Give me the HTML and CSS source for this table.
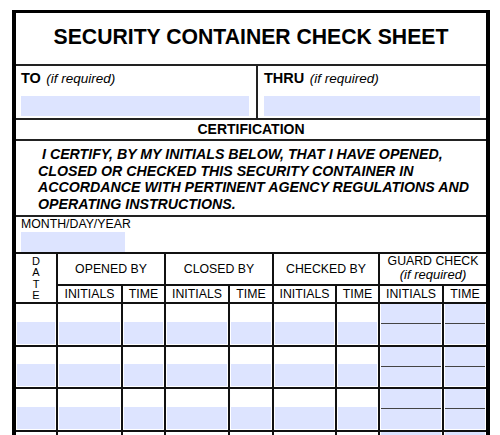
FILE: index.html
```html
<!DOCTYPE html>
<html>
<head>
<meta charset="utf-8">
<title>Security Container Check Sheet</title>
<link rel="stylesheet" href="styles.css">
</head>
<body>
<div class="sheet">
  <div class="title">SECURITY CONTAINER CHECK SHEET</div>
  <div class="addr">
    <div class="addr-cell to">
      <div class="label"><b>TO</b> <i>(if required)</i></div>
      <div class="field"></div>
    </div>
    <div class="addr-cell thru">
      <div class="label"><b>THRU</b> <i>(if required)</i></div>
      <div class="field"></div>
    </div>
  </div>
  <div class="cert-head">CERTIFICATION</div>
  <div class="cert-body">I CERTIFY, BY MY INITIALS BELOW, THAT I HAVE OPENED,<br>CLOSED OR CHECKED THIS SECURITY CONTAINER IN<br>ACCORDANCE WITH PERTINENT AGENCY REGULATIONS AND<br>OPERATING INSTRUCTIONS.</div>
  <div class="date-row">
    <div class="date-label">MONTH/DAY/YEAR</div>
    <div class="field date-field"></div>
  </div>
  <div class="grid">
    <div class="c h date-h"><span>D</span><span>A</span><span>T</span><span>E</span></div>
    <div class="c h span2">OPENED BY</div>
    <div class="c h span2">CLOSED BY</div>
    <div class="c h span2">CHECKED BY</div>
    <div class="c h span2 guard-h last"><span>GUARD CHECK</span><i>(if required)</i></div>
    <div class="c h">INITIALS</div>
    <div class="c h">TIME</div>
    <div class="c h">INITIALS</div>
    <div class="c h">TIME</div>
    <div class="c h">INITIALS</div>
    <div class="c h">TIME</div>
    <div class="c h">INITIALS</div>
    <div class="c h last">TIME</div>

    <div class="c d"><div class="f"></div></div>
    <div class="c d"><div class="f"></div></div>
    <div class="c d"><div class="f"></div></div>
    <div class="c d"><div class="f"></div></div>
    <div class="c d"><div class="f"></div></div>
    <div class="c d"><div class="f"></div></div>
    <div class="c d"><div class="f"></div></div>
    <div class="c g"><div class="f"></div><div class="f"></div></div>
    <div class="c g last"><div class="f"></div><div class="f"></div></div>

    <div class="c d"><div class="f"></div></div>
    <div class="c d"><div class="f"></div></div>
    <div class="c d"><div class="f"></div></div>
    <div class="c d"><div class="f"></div></div>
    <div class="c d"><div class="f"></div></div>
    <div class="c d"><div class="f"></div></div>
    <div class="c d"><div class="f"></div></div>
    <div class="c g"><div class="f"></div><div class="f"></div></div>
    <div class="c g last"><div class="f"></div><div class="f"></div></div>

    <div class="c d"><div class="f"></div></div>
    <div class="c d"><div class="f"></div></div>
    <div class="c d"><div class="f"></div></div>
    <div class="c d"><div class="f"></div></div>
    <div class="c d"><div class="f"></div></div>
    <div class="c d"><div class="f"></div></div>
    <div class="c d"><div class="f"></div></div>
    <div class="c g"><div class="f"></div><div class="f"></div></div>
    <div class="c g last"><div class="f"></div><div class="f"></div></div>

    <div class="c d"><div class="f"></div></div>
    <div class="c d"><div class="f"></div></div>
    <div class="c d"><div class="f"></div></div>
    <div class="c d"><div class="f"></div></div>
    <div class="c d"><div class="f"></div></div>
    <div class="c d"><div class="f"></div></div>
    <div class="c d"><div class="f"></div></div>
    <div class="c g"><div class="f"></div><div class="f"></div></div>
    <div class="c g last"><div class="f"></div><div class="f"></div></div>
  </div>
</div>
</body>
</html>
```
FILE: styles.css
```css
html {
  overflow: hidden;
  background: #fff;
}
body {
  margin: 0;
  font-family: "Liberation Sans", Arial, sans-serif;
  color: #000;
}
.sheet {
  margin: 10px 0 0 12px;
  width: 478px;
  box-sizing: border-box;
  border: 4px solid #000;
  border-top-width: 3px;
  border-bottom: none;
}
.title {
  height: 47px;
  line-height: 47px;
  padding-bottom: 4px;
  text-align: center;
  font-size: 21.2px;
  font-weight: bold;
  border-bottom: 2px solid #222;
}
.addr {
  display: flex;
  border-bottom: 2px solid #222;
}
.addr-cell {
  box-sizing: border-box;
  padding: 3px 6px 2px 6px;
}
.addr-cell.to {
  width: 242px;
  padding: 3px 7px 2px 5px;
  border-right: 2px solid #222;
}
.addr-cell.thru {
  flex: 1;
}
.label {
  line-height: 17px;
  white-space: nowrap;
}
.label b {
  font-size: 14.5px;
}
.label i {
  font-size: 13.5px;
  margin-left: 1px;
}
.field {
  background: #dde4ff;
}
.addr .field {
  margin-top: 9px;
  height: 20px;
}
.cert-head {
  height: 19px;
  line-height: 19px;
  text-align: center;
  font-size: 14px;
  font-weight: bold;
  border-bottom: 2px solid #222;
}
.cert-body {
  padding: 5px 0 2px 22px;
  font-size: 14.2px;
  line-height: 16.7px;
  font-weight: bold;
  font-style: italic;
  text-indent: 4px;
  white-space: nowrap;
  border-bottom: 2px solid #222;
}
.date-row {
  height: 35px;
  padding-left: 5px;
  border-bottom: 2px solid #111;
}
.date-label {
  font-size: 12.3px;
  line-height: 14px;
}
.date-field {
  margin-top: 1px;
  width: 104px;
  height: 20px;
}
.grid {
  display: grid;
  grid-template-columns: 42px 65px 43px 64px 44px 63px 43px 64px 42px;
  grid-template-rows: 32px 18px 43px 42px 43px 42px;
}
.c {
  box-sizing: border-box;
  border-right: 2px solid #111;
  border-bottom: 2px solid #111;
}
.c.last {
  border-right: none;
}
.h {
  display: flex;
  align-items: center;
  justify-content: center;
  font-size: 12.3px;
  white-space: nowrap;
  overflow: hidden;
}
.span2 {
  grid-column: span 2;
}
.date-h {
  grid-row: span 2;
  flex-direction: column;
  justify-content: flex-start;
  padding-top: 2px;
  font-size: 11px;
  line-height: 11.5px;
}
.date-h span {
  display: block;
}
.guard-h {
  flex-direction: column;
  justify-content: flex-start;
  padding-top: 1px;
  line-height: 13px;
}
.guard-h span {
  font-size: 12.3px;
}
.guard-h i {
  font-size: 13px;
  line-height: 13px;
}
.d {
  display: flex;
  flex-direction: column;
  justify-content: flex-end;
  padding: 0 1px 1px 1px;
}
.d .f {
  height: 22px;
  background: #dde4ff;
}
.g {
  display: flex;
  flex-direction: column;
  padding: 0 1px 1px 1px;
}
.g .f {
  flex: 1;
  background: #dde4ff;
}
.g .f + .f {
  border-top: 1px solid #444;
}
```
